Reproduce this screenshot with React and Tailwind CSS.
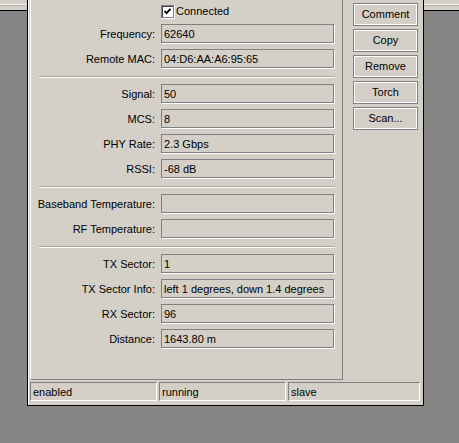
import React from 'react';

const groups = [
  [
    ['Frequency', '62640'],
    ['Remote MAC', '04:D6:AA:A6:95:65'],
  ],
  [
    ['Signal', '50'],
    ['MCS', '8'],
    ['PHY Rate', '2.3 Gbps'],
    ['RSSI', '-68 dB'],
  ],
  [
    ['Baseband Temperature', ''],
    ['RF Temperature', ''],
  ],
  [
    ['TX Sector', '1'],
    ['TX Sector Info', 'left 1 degrees, down 1.4 degrees'],
    ['RX Sector', '96'],
    ['Distance', '1643.80 m'],
  ],
];

const buttons = ['Comment', 'Copy', 'Remove', 'Torch', 'Scan...'];

const Field = ({ label, value }) => (
  <div className="flex h-[19px]">
    <div className="w-[124px] text-right pt-[1px] leading-[18px] whitespace-nowrap">{label}:</div>
    <div className="ml-[6px] w-[173px] h-[19px] border border-[#808080] shadow-[1px_1px_0_#ffffff] pl-[2px] pt-[1px] leading-[16px] whitespace-nowrap overflow-hidden">
      {value}
    </div>
  </div>
);

const Separator = () => (
  <div className="h-[4px] pt-[2px] ml-[8px] w-[296px]">
    <div className="h-[1px] bg-[#a9a59e]"></div>
    <div className="h-[1px] bg-white"></div>
  </div>
);

const Checkbox = () => (
  <div className="w-[13px] h-[13px] bg-white border border-[#808080] shadow-[1px_1px_0_#ffffff,inset_1px_1px_0_#404040] flex items-center justify-center">
    <svg width="9" height="9" viewBox="0 0 9 9">
      <path d="M1.5 4 L3.5 6.2 L7.5 1.8" fill="none" stroke="#000" strokeWidth="1.8" />
    </svg>
  </div>
);

const statusCls =
  'border-t border-l border-[#808080] border-b border-r border-b-white border-r-white pl-[2px] leading-[18px]';

export default function App() {
  return (
    <div className="relative w-[459px] h-[443px] overflow-hidden bg-[#868686] text-[11px] text-black font-['Liberation_Sans',Arial,sans-serif]">
      {/* window behind */}
      <div className="flex flex-col">
        <div className="h-[4px] bg-[#d4d0c8]"></div>
        <div className="h-[1px] bg-[#f4f4f4]"></div>
        <div className="h-[1px] bg-[#b4b0aa]"></div>
        <div className="h-[4px] bg-[#d4d0c8]"></div>
        <div className="h-[1px] bg-black"></div>
      </div>

      {/* dialog */}
      <div className="absolute left-[27px] top-[-20px] w-[397px] h-[426px] bg-[#d4d0c8] border-l border-r border-b border-black shadow-[inset_1px_0_0_#ffffff] flex flex-col">
        <div className="flex flex-1 min-h-0 pl-[2px] pt-[10px]">
          <div className="w-[313px] border-l border-t border-white border-r border-b border-r-[#808080] border-b-[#808080] flex flex-col gap-[6px] pt-[14px]">
            <div className="flex items-center h-[13px] pl-[130px]">
              <Checkbox />
              <span className="ml-[2px] leading-[13px]">Connected</span>
            </div>
            {groups.map((group, gi) => (
              <React.Fragment key={gi}>
                {gi > 0 && <Separator />}
                {group.map(([label, value]) => (
                  <Field key={label} label={label} value={value} />
                ))}
              </React.Fragment>
            ))}
          </div>

          <div className="ml-[10px] w-[65px] flex flex-col gap-[3px] pt-[13px]">
            {buttons.map((b) => (
              <div
                key={b}
                className="h-[23px] border border-[#808080] shadow-[inset_1px_1px_0_#ffffff,inset_-1px_-1px_0_#ffffff] flex items-center justify-center"
              >
                {b}
              </div>
            ))}
          </div>
        </div>

        {/* status bar */}
        <div className="flex mt-[2px] mb-[4px] h-[19px] pl-[2px] gap-[2px]">
          <div className={`w-[127px] ${statusCls}`}>enabled</div>
          <div className={`w-[127px] ${statusCls}`}>running</div>
          <div className={`w-[132px] ${statusCls}`}>slave</div>
        </div>
      </div>
    </div>
  );
}
